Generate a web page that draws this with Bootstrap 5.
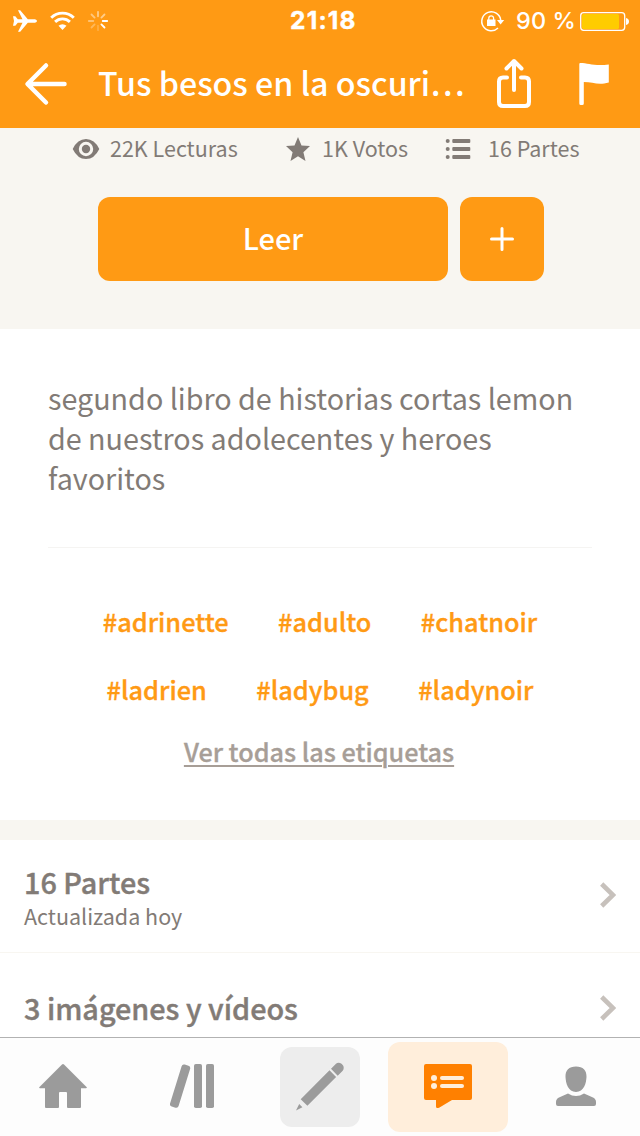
<!DOCTYPE html>
<html lang="es">
<head>
<meta charset="utf-8">
<meta name="viewport" content="width=device-width, initial-scale=1">
<title>Tus besos en la oscuridad</title>
<link href="https://cdn.jsdelivr.net/npm/bootstrap@5.3.0/dist/css/bootstrap.min.css" rel="stylesheet">
<style>
:root{--brand:#ff9a14;--ink:#827b76;--sand:#f8f6f1}
body{font-family:"Noto Sans CJK SC",sans-serif;color:var(--ink);background:#fff;height:1136px;overflow:hidden}
svg{display:block;flex:none}
.bg-brand{background:var(--brand)}
.bg-sand{background:var(--sand)}
.statusbar{height:40px;font-family:Inter,sans-serif;font-size:24px;line-height:41px;display:grid;grid-template-columns:290px 1fr auto}
.clock{font-size:24.500px;letter-spacing:1.2px;-webkit-text-stroke:.4px}
.charge{font-size:23.500px;letter-spacing:.1px;margin-left:10px}
.titlebar{height:88px;padding:0 30px 0 24px}
.titlebar h1{font-size:32.2px;font-weight:500;line-height:44px;width:372px;margin:0 0 5px 30px;white-space:nowrap}
.share-icon{margin-left:26px}
.stats{height:201px}
.stats .figures{height:42px;font-size:21.5px;line-height:40px;padding:0 0 0 72px}
.fig-text{margin-bottom:3px}
.gap-eye{gap:10px;width:213px}
.gap-star{gap:11px;width:160px}
.gap-list{gap:17px}
.cta-row{margin-top:27px;padding-left:98px;gap:12px}
.cta{height:84px;border-radius:12px;border:0;background:var(--brand);color:#fff;font-size:29px;font-weight:500;padding-bottom:3px}
.cta-read{width:350px}
.cta-add{width:84px;padding-bottom:1px}
.about{height:491px;padding:49px 48px 0}
.about p{font-size:28.7px;line-height:40px;height:120px}
.about hr{border-color:#f5f4f2;opacity:1;margin:49px 0 0;border-top-width:1px}
.tags{font-size:25.3px;font-weight:500;line-height:40px;gap:49.500px;-webkit-text-stroke:.35px}
.tags a{color:var(--brand);text-decoration:none}
.tags-first{margin-top:53px}
.tags-second{margin-top:28px}
.more{margin:22px 2px 0 0;line-height:40px}
.all-tags{font-size:25.2px;font-weight:500;color:#a79e97;-webkit-text-stroke:.3px;text-underline-offset:3px;text-decoration-thickness:2px}
.band{height:20px}
.entry{height:113px;padding:0 24px;border-bottom:1px solid var(--sand)}
.entry h2{font-size:28.8px;font-weight:500;line-height:40px;margin:-2px 0 0;-webkit-text-stroke:.4px}
.entry h2.with-note{margin:0}
.entry small{display:block;font-size:21.5px;line-height:30px;margin-top:-1px}
.chevron{margin-top:-2px}
.tabbar{height:99px;background:#fdfdfd;border-top:1px solid #b2b2b2}
.tabbar a{width:128px;height:98px;color:#9b9b9b}
.tile-write{width:80px;height:80px;border-radius:12px;background:#ededed}
.tile-on{width:120px;height:90px;border-radius:12px;background:#ffeedb;color:#ff8000}
</style>
</head>
<body class="d-flex flex-column">
<header class="bg-brand text-white flex-shrink-0">
  <div class="statusbar">
    <div class="d-flex align-items-center">
      <svg width="112" height="40" viewBox="0 0 112 40" fill="none" stroke="#fff">
        <path fill="#fff" stroke="none" d="M13 15.200h2.300l2.500 3h4.700L18 9.300h2.200L27.800 18.200h7.200q2 .7 2 1.800t-2 1.800h-7.200L20.200 30.800H18l4.500-9h-4.700l-2.500 3H13l1-4.800z"/>
        <path stroke-width="2.900" d="M51.200 16.800a16 16 0 0 1 22.600 0M55.100 20.900a10.500 10.500 0 0 1 14.800 0"/>
        <path fill="#fff" stroke="none" d="M62.500 29l-4-4.200a5.800 5.800 0 0 1 8 0z"/>
        <g stroke-width="1.800" stroke-linecap="round">
          <path d="M98 10.800v4.500" opacity=".5"/><path d="M104.500 13.500l-3.100 3.100" opacity=".5"/><path d="M102.700 20h4.500"/><path d="M101.400 23.400l3.100 3.100"/>
          <path d="M98 24.700v4.500" opacity=".2"/><path d="M94.600 23.400l-3.100 3.100" opacity=".3"/><path d="M93.300 20h-4.500" opacity=".4"/><path d="M94.600 16.600l-3.100-3.100" opacity=".45"/>
        </g>
      </svg>
    </div>
    <div class="fw-bold clock">21:18</div>
    <div class="d-flex align-items-center justify-content-end">
      <svg width="28" height="40" viewBox="478 0 28 40" fill="none" stroke="#fff">
        <path stroke-width="1.500" d="M500.700 19A9.500 9.500 0 1 0 498 27"/>
        <path fill="#fff" stroke="none" d="M497 19h7.200l-3.600 4.500zM487 18.500h8.500V25H487z"/>
        <path stroke-width="1.300" d="M488.800 19v-1.800a2.400 2.400 0 0 1 4.800 0V19"/>
      </svg>
      <span class="fw-medium charge">90 %</span>
      <svg class="ms-1" width="60" height="40" viewBox="580 0 60 40">
        <rect x="580.700" y="11.700" width="44" height="17.600" rx="3" fill="none" stroke="#fff" stroke-width="1.300"/>
        <rect x="582" y="13" width="37" height="15" rx="1.500" fill="#fc0"/>
        <path fill="#fff" d="M626 17q3 .8 3 3.500t-3 3.500z"/>
      </svg>
    </div>
  </div>
  <div class="titlebar d-flex align-items-center">
    <svg width="44" height="44" viewBox="0 0 44 44" fill="none" stroke="#fff" stroke-width="4.500" stroke-linecap="round" stroke-linejoin="round"><path d="M22 3.500L3.500 22 22 40.500M4 22h36.500"/></svg>
    <h1>Tus besos en la oscuri…</h1>
    <svg class="share-icon" width="36" height="52" viewBox="0 0 36 52" fill="none" stroke="#fff" stroke-width="4" stroke-linecap="round" stroke-linejoin="round"><path d="M18 32V3M10.500 10.500L18 3l7.500 7.500M11 19.500H7q-4 0-4 4V44q0 4 4 4h22q4 0 4-4V23.500q0-4-4-4h-4"/></svg>
    <svg width="32" height="44" viewBox="0 0 32 44" class="ms-auto" fill="#fff"><path d="M1.300 2q0-1 1-1c8 0 14 3.500 28.500 1.500V20.500C20 23.500 15 20 5.800 20V41.500q0 1.500-1.500 1.500H2.800Q1.300 43 1.300 41.500z"/></svg>
  </div>
</header>

<section class="stats bg-sand flex-shrink-0">
  <div class="figures d-flex">
    <span class="d-flex align-items-center gap-eye"><svg width="28" height="22" viewBox="0 0 28 22"><path fill="#827b76" fill-rule="evenodd" d="M.7 11Q5.500 1 14 1t13.300 10Q22.500 21 14 21T.7 11zM14 3.800a7.200 7.200 0 1 0 0 14.400 7.200 7.200 0 0 0 0-14.400z"/><circle cx="14" cy="11" r="4.200" fill="#827b76"/></svg><span class="fig-text">22K Lecturas</span></span>
    <span class="d-flex align-items-center gap-star"><svg width="26" height="26" viewBox="0 0 26 26" fill="#827b76"><path d="M13 1l3.500 8.500 8.500.6-6.600 6.100L20.500 25 13 20.200 5.500 25l2.100-8.800L1 10.100l8.500-.6z"/></svg><span class="fig-text">1K Votos</span></span>
    <span class="d-flex align-items-center gap-list"><svg width="26" height="22" viewBox="0 0 26 22" fill="#827b76"><circle cx="2.700" cy="3" r="2"/><circle cx="2.700" cy="11" r="2"/><circle cx="2.700" cy="19" r="2"/><rect x="7.300" y="1" width="18" height="4" rx="1"/><rect x="7.300" y="9" width="18" height="4" rx="1"/><rect x="7.300" y="17" width="18" height="4" rx="1"/></svg><span class="fig-text">16 Partes</span></span>
  </div>
  <div class="d-flex cta-row">
    <button class="cta cta-read">Leer</button>
    <button class="cta cta-add d-flex align-items-center justify-content-center" aria-label="Añadir"><svg width="24" height="24" viewBox="0 0 24 24" stroke="#fff" stroke-width="3" stroke-linecap="round"><path d="M12 1.500v21M1.500 12h21"/></svg></button>
  </div>
</section>

<section class="about flex-shrink-0">
  <p class="mb-0">segundo libro de historias cortas lemon<br>de nuestros adolecentes y heroes<br>favoritos</p>
  <hr>
  <div class="tags d-flex justify-content-center tags-first"><a href="#">#adrinette</a><a href="#">#adulto</a><a href="#">#chatnoir</a></div>
  <div class="tags d-flex justify-content-center tags-second"><a href="#">#ladrien</a><a href="#">#ladybug</a><a href="#">#ladynoir</a></div>
  <div class="text-center more"><a class="all-tags" href="#">Ver todas las etiquetas</a></div>
</section>

<main class="flex-grow-1 overflow-hidden">
  <div class="bg-sand band"></div>
  <div class="entry d-flex align-items-center justify-content-between">
    <div><h2 class="with-note">16 Partes</h2><small>Actualizada hoy</small></div>
    <svg class="chevron" width="16" height="26" viewBox="0 0 16 26" fill="none" stroke="#c7c1bc" stroke-width="4.600"><path d="M1.700 2L13 13 1.700 24"/></svg>
  </div>
  <div class="entry d-flex align-items-center justify-content-between">
    <h2>3 imágenes y vídeos</h2>
    <svg class="chevron" width="16" height="26" viewBox="0 0 16 26" fill="none" stroke="#c7c1bc" stroke-width="4.600"><path d="M1.700 2L13 13 1.700 24"/></svg>
  </div>
</main>

<nav class="tabbar d-flex flex-shrink-0" aria-label="Principal">
  <a href="#" class="d-flex align-items-center justify-content-center" aria-label="Inicio"><svg width="50" height="46" viewBox="1 1 50 46" fill="currentColor"><path d="M24 1.500q1-1 2 0L48.500 24q1 1.300-.5 1.300H43V44q0 1-1 1H30q-1 0-1-1V30q0-1-1-1h-6q-1 0-1 1v14q0 1-1 1H8q-1 0-1-1V25.300H2Q.500 25.300 1.500 24z"/></svg></a>
  <a href="#" class="d-flex align-items-center justify-content-center" aria-label="Biblioteca"><svg width="46" height="46" viewBox="1 1 46 46" fill="currentColor"><rect x="26" y="1" width="8" height="44" rx="1.800"/><rect x="38" y="1" width="8" height="44" rx="1.800"/><path stroke="currentColor" stroke-width="5" stroke-linejoin="round" d="M16 4l3.700 1.200L8.200 42.300l-3.700-1.200z"/></svg></a>
  <a href="#" class="d-flex align-items-center justify-content-center" aria-label="Escribir"><span class="tile-write d-flex align-items-center justify-content-center"><svg width="50" height="50" viewBox="0 0 50 50" fill="currentColor"><path d="M1 49l3.200-6.400 3.200 3.200zM5.700 37.800L34.500 8.800l6.600 6.600L12.400 44.200zM36 7.300l5-5q1.500-1.300 4-.8 3.500 1.500 3.700 4.500.2 2-1 3.200l-5 5z" transform="translate(0 -.5)"/></svg></span></a>
  <a href="#" class="d-flex align-items-center justify-content-center" aria-label="Novedades"><span class="tile-on d-flex align-items-center justify-content-center"><svg width="48" height="46" viewBox="0 1 48 46"><path fill="currentColor" d="M2 1h44q2 0 2 2v32q0 2-2 2H28l-12.500 7.500Q12 46 12 43.500V37H2q-2 0-2-2V3q0-2 2-2z"/><g fill="#ffeedb"><circle cx="10" cy="15" r="3"/><circle cx="10" cy="23" r="3"/><rect x="16" y="13" width="24" height="4" rx="2"/><rect x="16" y="21" width="24" height="4" rx="2"/></g></svg></span></a>
  <a href="#" class="d-flex align-items-center justify-content-center" aria-label="Perfil"><svg width="42" height="42" viewBox="0 1 42 42" fill="currentColor"><path d="M21 1.500c7 0 10.800 4 10.500 10.500-.3 6-2.500 15-10.500 15S10.800 18 10.500 12C10.200 5.500 14 1.500 21 1.500zM13 28.500q4 2.500 8 2.500t8-2.500l9 4q3 1.500 3 4.500v2q0 2-2 2H3q-2 0-2-2v-2q0-3 3-4.500z"/></svg></a>
</nav>
<script src="https://cdn.jsdelivr.net/npm/bootstrap@5.3.0/dist/js/bootstrap.bundle.min.js"></script>
</body>
</html>
